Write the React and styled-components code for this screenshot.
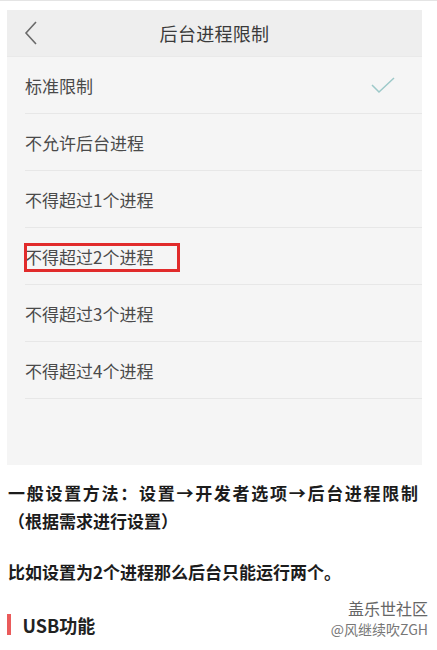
import React from "react";
import styled, { createGlobalStyle } from "styled-components";

const GlobalStyle = createGlobalStyle`
  html, body {
    margin: 0;
    padding: 0;
    background: #fff;
    font-family: "Noto Sans CJK SC", "Noto Sans", sans-serif;
  }
`;

const Page = styled.div`
  position: relative;
  width: 437px;
  height: 650px;
  overflow: hidden;
  border-top: 1px solid #e4e4e4;
  box-sizing: border-box;
`;

const Shot = styled.div`
  margin: 9px 15px 0 7px;
  width: 415px;
  background: #f5f5f5;
`;

const Header = styled.div`
  display: grid;
  grid-template-columns: 1fr auto 1fr;
  align-items: center;
  height: 47px;
  background: #eeeeee;
  border-bottom: 1px solid #e9e9e9;
  box-sizing: border-box;
  padding: 0 17px;
`;

const Title = styled.div`
  font-size: 18px;
  color: #3a3a3a;
  letter-spacing: 0.3px;
`;

const List = styled.div`
  height: 408px;
  padding-left: 18px;
`;

const Row = styled.div`
  display: flex;
  align-items: center;
  justify-content: space-between;
  height: 57px;
  padding-right: 27px;
  border-bottom: 1px solid #e7e7e7;
  box-sizing: border-box;
  font-size: 17px;
  line-height: 17px;
  color: #4a4a4a;
`;

const Label = styled.span`
  position: relative;
  display: block;
  ${({ $marked }) =>
    $marked &&
    `
    &::after {
      content: "";
      position: absolute;
      left: -1px;
      top: -5px;
      width: 156px;
      height: 29px;
      border: 3px solid #e12b2b;
      box-sizing: border-box;
    }
  `}
`;

const Paragraph = styled.p`
  margin: 0;
  padding: 0 19px 0 8px;
  font-size: 17px;
  line-height: 28px;
  font-weight: 700;
  color: #1c1c1c;
`;

const Line = styled.span`
  display: block;
  text-align: ${({ $justify }) => ($justify ? "justify" : "left")};
  text-align-last: ${({ $justify }) => ($justify ? "justify" : "auto")};
`;

const Intro = styled.div`
  padding-top: 14px;
  display: flex;
  flex-direction: column;
  gap: 23px;
`;

const Heading = styled.div`
  display: flex;
  align-items: center;
  gap: 12px;
  margin-top: 28px;
  padding-left: 7px;
  height: 21px;
  font-size: 18px;
  font-weight: 700;
  color: #222;
`;

const Bar = styled.span`
  width: 3.5px;
  height: 21px;
  background: #ea5b5b;
`;

const Watermark = styled.div`
  position: absolute;
  right: 9px;
  top: 597px;
  display: flex;
  flex-direction: column;
  align-items: flex-end;
  line-height: 21px;
  color: #6e6e6e;
`;

const MarkTop = styled.span`
  font-size: 16px;
  color: #666;
`;

const MarkBottom = styled.span`
  font-size: 14px;
  color: #777;
`;

const Back = () => (
  <svg width="14" height="24" viewBox="0 0 14 24">
    <path d="M12 1 L2 12 L12 23" fill="none" stroke="#6a6a6a" strokeWidth="1.6" />
  </svg>
);

const Check = () => (
  <svg width="24" height="18" viewBox="0 0 24 18">
    <path d="M1 9 L8 16 L23 2" fill="none" stroke="#9dc9c9" strokeWidth="1.5" />
  </svg>
);

const options = [
  "标准限制",
  "不允许后台进程",
  "不得超过1个进程",
  "不得超过2个进程",
  "不得超过3个进程",
  "不得超过4个进程",
];

export default function App() {
  return (
    <>
      <GlobalStyle />
      <Page>
        <Shot>
          <Header>
            <Back />
            <Title>后台进程限制</Title>
            <span />
          </Header>
          <List>
            {options.map((item, i) => (
              <Row key={item}>
                <Label $marked={i === 3}>{item}</Label>
                {i === 0 && <Check />}
              </Row>
            ))}
          </List>
        </Shot>
        <Intro>
          <Paragraph>
            <Line $justify>一般设置方法：设置→开发者选项→后台进程限制</Line>
            <Line>（根据需求进行设置）</Line>
          </Paragraph>
          <Paragraph>比如设置为2个进程那么后台只能运行两个。</Paragraph>
        </Intro>
        <Heading>
          <Bar />
          USB功能
        </Heading>
        <Watermark>
          <MarkTop>盖乐世社区</MarkTop>
          <MarkBottom>@风继续吹ZGH</MarkBottom>
        </Watermark>
      </Page>
    </>
  );
}
